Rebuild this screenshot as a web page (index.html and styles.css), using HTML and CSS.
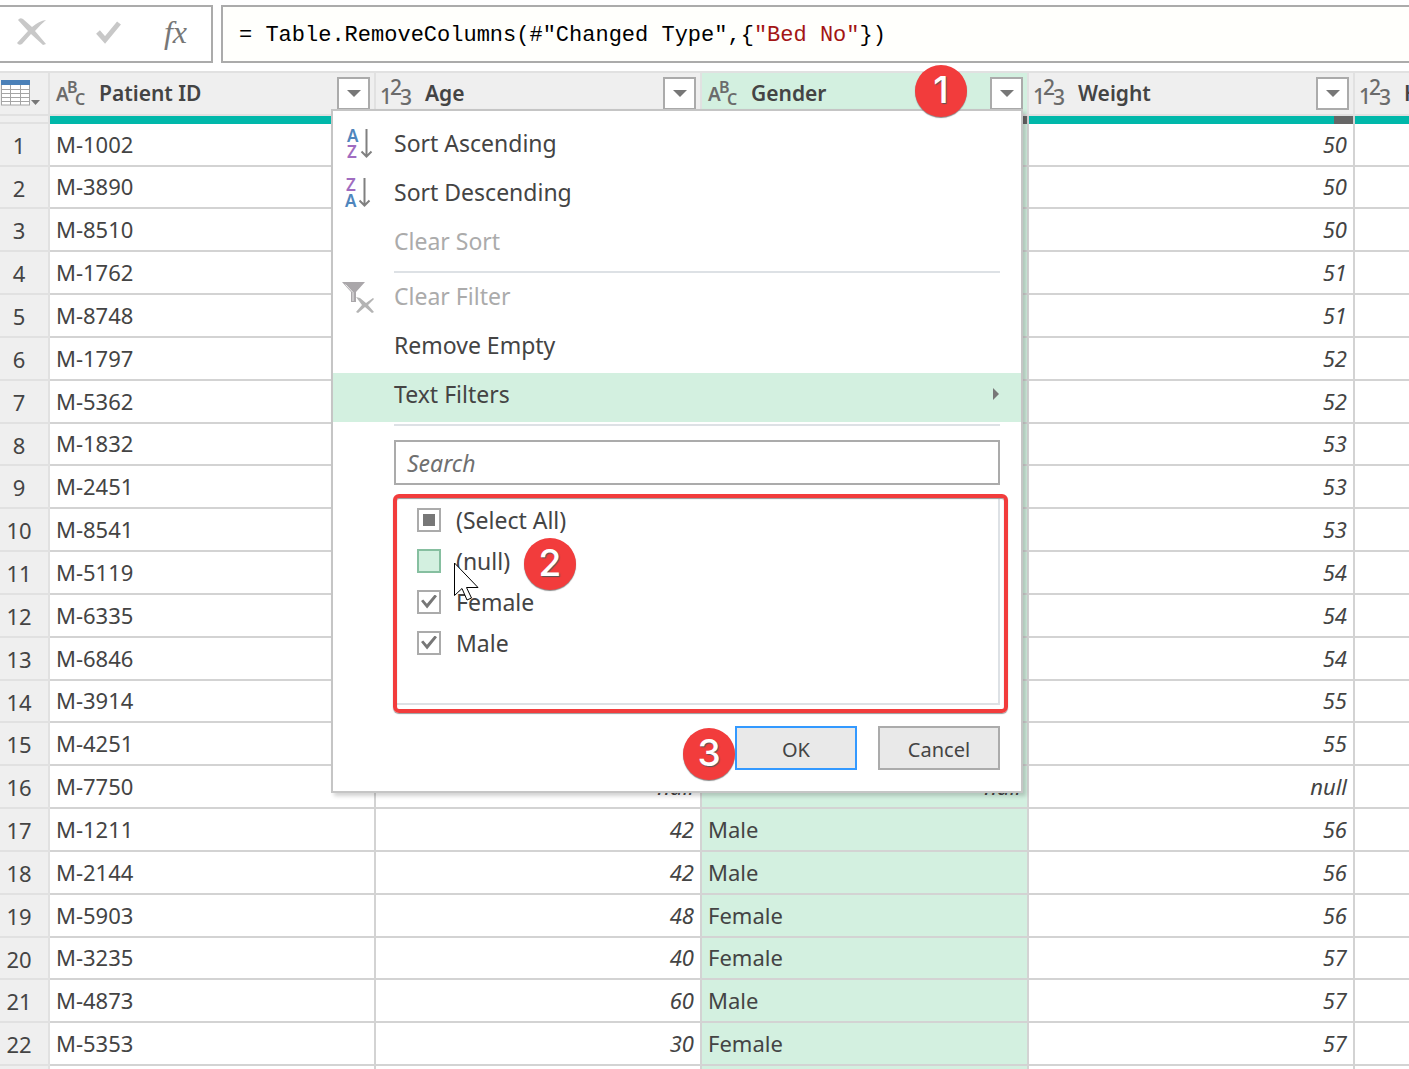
FILE: index.html
```html
<!DOCTYPE html>
<html lang="en">
<head>
<meta charset="utf-8">
<title>Query Editor</title>
<link rel="stylesheet" href="styles.css">
</head>
<body>
<header class="formula-bar">
  <div class="formula-actions">
    <button type="button" aria-label="Cancel edit"><svg width="30" height="28" viewBox="0 0 30 28"><path d="M1 2Q3-1 6 1L15 9Q22 3 29 2 23 7 18 13L29 26 26 27 14 16 5 26Q2 28 0 25L11 13Z" fill="#c8c8c8"/></svg></button>
    <button type="button" aria-label="Commit edit"><svg width="32" height="24" viewBox="-7 0 32 24"><path d="M2 12 9 20 23 3" fill="none" stroke="#c8c8c8" stroke-width="5"/></svg></button>
    <button type="button" class="fx">fx</button>
  </div>
  <div class="formula">= Table.RemoveColumns(#"Changed Type",{<span class="string">"Bed No"</span>})</div>
</header>
<main class="grid">
  <div class="sheet">
  <table>
    <colgroup><col class="c-num"><col><col><col class="c-gender"><col><col></colgroup>
    <thead>
      <tr>
        <th class="corner"><button type="button" class="table-menu" aria-label="Table options"><svg width="40" height="30" viewBox="0 0 40 30"><path d="M2 6H29V26H2Z" fill="#fff"/><path d="M1.500 6V26M10.500 6V26M20.500 6V26M29.500 6V26M1 10.500H30M1 14.500H30M1 18.500H30M1 22.500H30M1 26H30" stroke="#a5a5a5" fill="none"/><path d="M1 1H30V6H1Z" fill="#4a80b8"/><path d="M31 21H40L35.500 26Z" fill="#777"/></svg></button></th>
        <th><div class="head"><svg class="type text" viewBox="0 0 31 28"><text x="0" y="21" font-size="19">A</text><text x="11" y="13" font-size="16">B</text><text x="19" y="25" font-size="16">C</text></svg><span>Patient ID</span><button type="button" class="drop" aria-label="Filter Patient ID"></button></div></th>
        <th><div class="head"><svg class="type" viewBox="0 0 31 28"><text x="-2" y="24">1</text><text x="8" y="15">2</text><text x="18" y="25">3</text></svg><span>Age</span><button type="button" class="drop" aria-label="Filter Age"></button></div></th>
        <th class="selected"><div class="head"><svg class="type text" viewBox="0 0 31 28"><text x="0" y="21" font-size="19">A</text><text x="11" y="13" font-size="16">B</text><text x="19" y="25" font-size="16">C</text></svg><span>Gender</span><button type="button" class="drop" aria-label="Filter Gender"></button></div></th>
        <th><div class="head"><svg class="type" viewBox="0 0 31 28"><text x="-2" y="24">1</text><text x="8" y="15">2</text><text x="18" y="25">3</text></svg><span>Weight</span><button type="button" class="drop" aria-label="Filter Weight"></button></div></th>
        <th><div class="head"><svg class="type" viewBox="0 0 31 28"><text x="-2" y="24">1</text><text x="8" y="15">2</text><text x="18" y="25">3</text></svg><span>Height</span></div></th>
      </tr>
      <tr class="quality"><td></td><td></td><td class="partial"></td><td class="partial"></td><td class="partial"></td><td></td></tr>
    </thead>
    <tbody>
      <tr><th>1</th><td>M-1002</td><td></td><td></td><td>50</td><td></td></tr>
      <tr><th>2</th><td>M-3890</td><td></td><td></td><td>50</td><td></td></tr>
      <tr><th>3</th><td>M-8510</td><td></td><td></td><td>50</td><td></td></tr>
      <tr><th>4</th><td>M-1762</td><td></td><td></td><td>51</td><td></td></tr>
      <tr><th>5</th><td>M-8748</td><td></td><td></td><td>51</td><td></td></tr>
      <tr><th>6</th><td>M-1797</td><td></td><td></td><td>52</td><td></td></tr>
      <tr><th>7</th><td>M-5362</td><td></td><td></td><td>52</td><td></td></tr>
      <tr><th>8</th><td>M-1832</td><td></td><td></td><td>53</td><td></td></tr>
      <tr><th>9</th><td>M-2451</td><td></td><td></td><td>53</td><td></td></tr>
      <tr><th>10</th><td>M-8541</td><td></td><td></td><td>53</td><td></td></tr>
      <tr><th>11</th><td>M-5119</td><td></td><td></td><td>54</td><td></td></tr>
      <tr><th>12</th><td>M-6335</td><td></td><td></td><td>54</td><td></td></tr>
      <tr><th>13</th><td>M-6846</td><td></td><td></td><td>54</td><td></td></tr>
      <tr><th>14</th><td>M-3914</td><td></td><td></td><td>55</td><td></td></tr>
      <tr><th>15</th><td>M-4251</td><td></td><td></td><td>55</td><td></td></tr>
      <tr><th>16</th><td>M-7750</td><td>null</td><td class="null">null</td><td>null</td><td></td></tr>
      <tr><th>17</th><td>M-1211</td><td>42</td><td>Male</td><td>56</td><td></td></tr>
      <tr><th>18</th><td>M-2144</td><td>42</td><td>Male</td><td>56</td><td></td></tr>
      <tr><th>19</th><td>M-5903</td><td>48</td><td>Female</td><td>56</td><td></td></tr>
      <tr><th>20</th><td>M-3235</td><td>40</td><td>Female</td><td>57</td><td></td></tr>
      <tr><th>21</th><td>M-4873</td><td>60</td><td>Male</td><td>57</td><td></td></tr>
      <tr><th>22</th><td>M-5353</td><td>30</td><td>Female</td><td>57</td><td></td></tr>
      <tr><th></th><td></td><td></td><td></td><td></td><td></td></tr>
    </tbody>
  </table>
  </div>

  <section class="filter-menu" aria-label="Gender filter">
    <button type="button" class="item"><svg width="34" height="32" viewBox="-3 -1 34 32"><g font-weight="600" font-size="17"><text x="3" y="13" fill="#4f86bd">A</text><text x="3" y="29" fill="#a06cc0">Z</text></g><path d="M22.500 0V28M17.500 22.500 22.500 27.500 27.500 22.500" fill="none" stroke="#808080" stroke-width="2"/></svg><span>Sort Ascending</span></button>
    <button type="button" class="item"><svg width="34" height="32" viewBox="-3 -1 34 32"><g font-weight="600" font-size="17"><text x="2" y="13" fill="#a06cc0">Z</text><text x="1" y="29" fill="#4f86bd">A</text></g><path d="M20.500 0V28M15.500 22.500 20.500 27.500 25.500 22.500" fill="none" stroke="#808080" stroke-width="2"/></svg><span>Sort Descending</span></button>
    <button type="button" class="item" disabled><span>Clear Sort</span></button>
    <hr>
    <button type="button" class="item" disabled><svg width="34" height="32" viewBox="0 0 34 32"><path d="M1 1H24L15 11V21H10V11Z" fill="#aaa7aa"/><path d="M4.500 3.500 12 11.500V20" fill="none" stroke="#eee" stroke-width="1"/><path d="M15 16 19 17 25 22 32 17 33 18 27 24 33 31 31 32 24 26 17 32 15 31 21 24Z" fill="#b4b4b4"/></svg><span>Clear Filter</span></button>
    <button type="button" class="item"><span>Remove Empty</span></button>
    <button type="button" class="item active"><span>Text Filters</span></button>
    <hr>
    <input class="search" type="text" placeholder="Search" aria-label="Search">
    <div class="values">
      <label><input type="checkbox" class="mixed"><span>(Select All)</span></label>
      <label><input type="checkbox" class="hover"><span>(null)</span></label>
      <label><input type="checkbox" checked><span>Female</span></label>
      <label><input type="checkbox" checked><span>Male</span></label>
      <div class="highlight"></div>
      <svg class="cursor" width="26" height="40" viewBox="0 0 26 40"><path d="M1.500 1V33.500L9 26.500 14 38 18.500 36 13.500 25.500H25Z" fill="#fff" stroke="#000"/></svg>
    </div>
    <div class="actions">
      <button type="button" class="primary">OK</button>
      <button type="button">Cancel</button>
    </div>
  </section>
  <span class="badge one">1</span>
  <span class="badge two">2</span>
  <span class="badge three">3</span>
</main>
</body>
</html>
```
FILE: styles.css
```css
* { box-sizing: border-box; }

body {
  margin: 0;
  height: 100vh;
  overflow: hidden;
  display: flex;
  flex-direction: column;
  background: #fff;
  color: #444;
  font: 22px/30px "Noto Sans", "Open Sans", sans-serif;
}

button, input { font: inherit; color: inherit; margin: 0; padding: 0; }
svg { display: block; flex: none; overflow: visible; }

/* Formula bar */
.formula-bar { display: flex; gap: 8px; padding: 5px 0 8px; flex: none; }
.formula-actions {
  display: flex;
  align-items: center;
  justify-content: space-between;
  width: 213px;
  height: 58px;
  padding: 0 24px 4px 17px;
  border: 2px solid #ababab;
  border-left: 0;
}
.formula-actions button { border: 0; background: none; }
.formula-actions .fx {
  color: #777;
  font: italic 32px/36px "Liberation Serif", serif;
}
.formula {
  flex: 1;
  height: 58px;
  padding-left: 16px;
  border: 2px solid #ababab;
  border-right: 0;
  background: #fffffc;
  color: #000;
  font: 22px/58px "Liberation Mono", monospace;
  white-space: nowrap;
}
.string { color: #a31515; }

/* Data grid */
.grid { position: relative; flex: 1; min-height: 0; border-top: 2px solid #e1e1e1; }
.sheet { height: 100%; overflow: hidden; }
table {
  width: 1681px;
  table-layout: fixed;
  border-collapse: separate;
  border-spacing: 0;
}
col { width: 326px; }
.c-num { width: 50px; }
.c-gender { width: 327px; }
th, td { padding: 0; white-space: nowrap; }
thead th {
  height: 43px;
  background: #efefef;
  border: solid #e1e1e1;
  border-width: 0 2px 2px 0;
  text-align: left;
}
.head { display: flex; align-items: center; padding: 0 4px 0 6px; font-size: 21px; font-weight: 600; }
.head span { margin-left: 12px; padding-bottom: 1px; }
.type { width: 31px; height: 28px; fill: #6b6b6b; font-size: 21px; font-weight: 500; }
.type.text { font-weight: 600; }
.drop {
  display: grid;
  place-items: center;
  width: 33px;
  height: 33px;
  margin-left: auto;
  border: 2px solid #ababab;
  background: #fff;
}
.drop::after { content: ""; border: solid transparent; border-width: 7px 7px 0; border-top-color: #777; }
.table-menu { display: block; border: 0; background: none; }
th.selected, tr > td:nth-child(4) { background: #d3f0e0; }

.quality td { height: 8px; background: #00b8aa; border-right: 2px solid #d3d3d3; }
.quality td:first-child { background: #efefef; border-right-color: #e1e1e1; border-bottom: 2px solid #e1e1e1; }
.quality td.partial { background: linear-gradient(to right, #00b8aa 94%, #666 94%); }

tbody tr { height: 43px; }
tbody tr:nth-child(6n+2) { height: 42px; }
tbody th {
  padding: 1px 10px 0 0;
  background: #efefef;
  border: solid #e1e1e1;
  border-width: 0 2px 2px 0;
  font-weight: 400;
}
tbody td { padding: 0 6px 2px; border: solid #d3d3d3; border-width: 0 2px 2px 0; }
tbody td:nth-child(3), tbody td:nth-child(5), tbody td.null { text-align: right; font-style: italic; }

/* Filter menu */
.filter-menu {
  position: absolute;
  top: 36px;
  left: 331px;
  width: 692px;
  padding: 11px 0 21px;
  border: 2px solid #c5c5c5;
  background: #fff;
  box-shadow: 3px 3px 4px rgba(0, 0, 0, .18);
}
.item {
  position: relative;
  display: flex;
  align-items: center;
  justify-content: space-between;
  width: 100%;
  height: 49px;
  padding: 0 22px 7px 61px;
  border: 0;
  background: none;
  font-size: 23px;
}
.item svg { position: absolute; left: 8px; top: 6px; }
.item:disabled { color: #ababab; }
.item.active { background: #d3f0e0; }
.item.active::after { content: ""; border: solid transparent; border-width: 6px 0 6px 6px; border-left-color: #777; }
hr { height: 2px; margin: 2px 21px 2px 61px; border: 0; background: #dde1e5; }
.search {
  display: block;
  width: 606px;
  height: 45px;
  margin: 14px 0 0 61px;
  padding: 0 11px;
  border: 2px solid #ababab;
  border-radius: 0;
  background: #fff;
  font-size: 23px;
}
.search::placeholder { color: #707070; font-style: italic; opacity: 1; }
.values {
  position: relative;
  height: 208px;
  margin: 12px 21px 0 61px;
  padding-left: 21px;
  border: 2px solid #dde1e5;
  font-size: 23px;
}
.values label { display: flex; align-items: center; gap: 15px; height: 41px; }
.values label span { padding-top: 1px; }
.values input {
  appearance: none;
  display: grid;
  place-items: center;
  width: 24px;
  height: 24px;
  border: 2px solid #ababab;
  background: #fff;
}
.values input.hover { background: #d3f0e0; border-color: #86bfa0; }
.values input.mixed::before { content: ""; width: 12px; height: 12px; background: #777; }
.values input:checked::before {
  content: "";
  width: 16px;
  height: 14px;
  background: #777;
  clip-path: polygon(0 46%, 14% 36%, 37% 66%, 86% 0, 100% 12%, 38% 100%);
}
.highlight {
  position: absolute;
  inset: -5px -10px -10px -3px;
  border: 4px solid #f23c3c;
  border-radius: 6px;
  box-shadow: 0 1px 1px #999, inset 0 1px 1px #999;
}
.cursor { position: absolute; left: 57px; top: 63px; }
.actions { display: flex; justify-content: flex-end; gap: 21px; margin: 21px 21px 0; }
.actions button {
  width: 122px;
  height: 44px;
  padding-top: 3px;
  border: 2px solid #ababab;
  background: #e9e9e9;
  font-size: 20px;
}
.actions .primary { border-color: #3399ff; }

/* Step markers */
.badge {
  position: absolute;
  width: 52px;
  height: 52px;
  border-radius: 50%;
  background: #f23c3c;
  color: #fff;
  font: 500 37px/50px Inter, "Open Sans", sans-serif;
  text-align: center;
  text-shadow: 1px 1px 1px #555;
  box-shadow: 0 1px 1px #888;
}
.one { left: 915px; top: -8px; }
.two { left: 524px; top: 465px; }
.three { left: 683px; top: 655px; }
```
